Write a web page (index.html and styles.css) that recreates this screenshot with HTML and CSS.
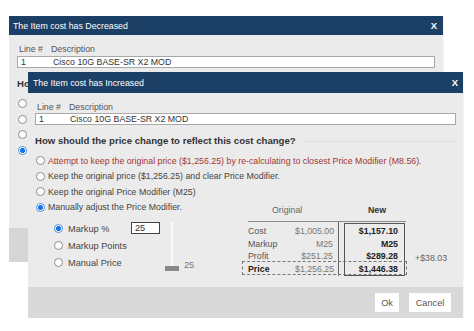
FILE: index.html
```html
<!DOCTYPE html>
<html lang="en">
  <head>
    <meta charset="UTF-8" />
    <title>Cost change</title>
    <link rel="stylesheet" href="styles.css">
  </head>
  <body>
    <div class="dialog dialog-back">
      <div class="dialog-title">
        <span>The Item cost has Decreased</span>
        <span class="close">X</span>
      </div>
      <div class="dialog-body">
        <div class="line-labels"><span class="col-line">Line #</span><span>Description</span></div>
        <div class="line-field"><span class="col-line">1</span><span>Cisco 10G BASE-SR X2 MOD</span></div>
        <div class="question">How</div>
        <div class="options">
          <div class="option"><span class="radio"></span></div>
          <div class="option"><span class="radio"></span></div>
          <div class="option"><span class="radio"></span></div>
          <div class="option"><span class="radio on"></span></div>
        </div>
      </div>
      <div class="dialog-footer"></div>
    </div>

    <div class="dialog dialog-front">
      <div class="dialog-title">
        <span>The Item cost has Increased</span>
        <span class="close">X</span>
      </div>
      <div class="dialog-body">
        <div class="line-labels"><span class="col-line">Line #</span><span>Description</span></div>
        <div class="line-field"><span class="col-line">1</span><span>Cisco 10G BASE-SR X2 MOD</span></div>
        <div class="question">How should the price change to reflect this cost change?</div>
        <div class="options">
          <div class="option warn"><span class="radio"></span>Attempt to keep the original price ($1,256.25) by re-calculating to closest Price Modifier (M8.56).</div>
          <div class="option"><span class="radio"></span>Keep the original price ($1,256.25) and clear Price Modifier.</div>
          <div class="adjust">
            <div class="adjust-left">
              <div class="option"><span class="radio"></span>Keep the original Price Modifier (M25)</div>
              <div class="option"><span class="radio on"></span>Manually adjust the Price Modifier.</div>
              <div class="manual">
                <div class="sub-options">
                  <div class="sub-option"><span class="radio on"></span>Markup %</div>
                  <div class="sub-option"><span class="radio"></span>Markup Points</div>
                  <div class="sub-option"><span class="radio"></span>Manual Price</div>
                </div>
                <div class="markup-box">25</div>
                <div class="slider">
                  <div class="slider-track"></div>
                  <div class="slider-thumb"></div>
                </div>
                <div class="slider-value">25</div>
              </div>
            </div>

            <div class="calc">
              <div class="calc-head">
                <span class="head-orig">Original</span>
                <span class="head-new">New</span>
              </div>
              <div class="calc-body">
                <div class="calc-labels">
                  <div>Cost</div>
                  <div>Markup</div>
                  <div>Profit</div>
                  <div class="strong">Price</div>
                </div>
                <div class="calc-orig">
                  <div>$1,005.00</div>
                  <div>M25</div>
                  <div>$251.25</div>
                  <div>$1,256.25</div>
                </div>
                <div class="calc-new">
                  <div>$1,157.10</div>
                  <div>M25</div>
                  <div>$289.28</div>
                  <div>$1,446.38</div>
                </div>
                <div class="calc-diff">+$38.03</div>
              </div>
              <div class="price-mark"></div>
            </div>
          </div>
        </div>
      </div>
      <div class="dialog-footer">
        <button class="btn btn-ok">Ok</button>
        <button class="btn btn-cancel">Cancel</button>
      </div>
    </div>
  </body>
</html>
```

FILE: styles.css
```css
body {
  margin: 0;
  background: #fff;
  font-family: "Liberation Sans", Arial, sans-serif;
  font-size: 8.8px;
  color: #444;
}

.dialog {
  position: absolute;
  display: flex;
  flex-direction: column;
  background: #ebebeb;
  box-shadow: 1px 0 0 #f6f6f6;
}

.dialog-back {
  left: 9px;
  top: 16px;
  width: 434px;
  height: 246px;
}

.dialog-front {
  left: 28px;
  top: 72px;
  width: 435px;
  height: 246px;
}

.dialog-title {
  display: flex;
  justify-content: space-between;
  align-items: center;
  background: #1c3f66;
  color: #fff;
  padding: 0 6px 0 4px;
  height: 19px;
}

.dialog-front .dialog-title {
  height: 21px;
  padding: 0 5px 0 5px;
}

.close {
  font-size: 9.5px;
  font-weight: bold;
}

.dialog-body {
  padding: 8px 8px 0 8px;
  height: 193px;
  box-sizing: border-box;
}

.dialog-front .dialog-body {
  padding: 8px 7px 0 7px;
  height: 194px;
}

.line-labels {
  display: flex;
  line-height: 12px;
  padding-left: 2px;
  color: #555;
}

.col-line {
  width: 32px;
}

.line-field {
  display: flex;
  height: 12px;
  line-height: 10px;
  box-sizing: border-box;
  margin-top: 1px;
  padding-left: 3px;
  border: 1px solid #a9a9a9;
  background: #fff;
  color: #333;
}

.dialog-front .line-field {
  margin-top: 0;
}

.dialog-front .line-field .col-line {
  width: 31px;
}

.question {
  display: flex;
  align-items: center;
  margin-top: 10px;
  line-height: 12px;
  font-size: 9.6px;
  font-weight: bold;
  color: #333;
  white-space: nowrap;
  overflow: hidden;
}

.question::after {
  content: "";
  flex: 1;
  margin-left: 6px;
  border-top: 1px solid #dedede;
}

.dialog-back .question {
  width: 11px;
}

.options {
  margin-top: 6px;
}

.option {
  display: flex;
  align-items: center;
  height: 15.5px;
  padding-left: 1px;
  white-space: nowrap;
}

.option.warn {
  color: #a3362f;
}

.radio {
  width: 9px;
  height: 9px;
  box-sizing: border-box;
  border: 1px solid #8d8d8d;
  border-radius: 50%;
  background: #fff;
  margin-right: 3px;
  flex: none;
}

.radio.on {
  border-color: #4a8fe0;
  background: radial-gradient(circle, #1a73e8 0 2.2px, #fff 2.8px);
}

.adjust {
  display: flex;
}

.adjust-left {
  width: 207px;
  flex: none;
}

.manual {
  display: flex;
  margin-top: 5px;
  padding-left: 19px;
}

.sub-options {
  width: 77px;
}

.sub-option {
  display: flex;
  align-items: center;
  height: 17px;
  font-size: 9.2px;
  white-space: nowrap;
}

.sub-option .radio {
  margin-right: 5px;
}

.markup-box {
  width: 29px;
  height: 12px;
  box-sizing: border-box;
  margin-top: 1.5px;
  padding-left: 3px;
  line-height: 10px;
  border: 1px solid #444;
  background: #fff;
  color: #333;
  font-size: 9.2px;
}

.slider {
  display: flex;
  flex-direction: column;
  align-items: center;
  width: 14px;
  margin: 1.5px 0 0 5px;
}

.slider-track {
  width: 2px;
  height: 44px;
  background: #fafafa;
}

.slider-thumb {
  width: 14px;
  height: 5px;
  background: #888;
}

.slider-value {
  align-self: flex-end;
  margin: 0 0 0 5px;
  line-height: 12px;
  color: #777;
  font-size: 9.2px;
}

.calc {
  position: relative;
  margin-top: 20px;
}

.calc-head {
  display: flex;
  width: 158px;
  margin-left: 6px;
  height: 17px;
  line-height: 12px;
  border-bottom: 1px solid #8a8a8a;
  color: #666;
}

.head-orig {
  margin-left: 24px;
  width: 96px;
}

.head-new {
  font-weight: bold;
  color: #333;
}

.calc-body {
  display: flex;
  margin-left: 5px;
  line-height: 12.5px;
}

.calc-labels {
  width: 47px;
  padding: 3px 0 0 1px;
  color: #555;
}

.strong {
  font-weight: bold;
  color: #222;
}

.calc-orig {
  width: 38px;
  padding: 3px 5px 1px 0;
  text-align: right;
  border-right: 1px solid #666;
  color: #777;
}

.calc-new {
  width: 53px;
  margin: 1px 0 0 5px;
  padding: 1px 6px 0 0;
  text-align: right;
  font-weight: bold;
  color: #222;
  border: 1px solid #555;
}

.calc-diff {
  padding: 30px 0 0 10px;
  color: #666;
}

.price-mark {
  position: absolute;
  left: 0;
  top: 57px;
  width: 165px;
  height: 14px;
  box-sizing: border-box;
  border: 1px dashed #777;
}

.dialog-footer {
  flex: 1;
  background: #d6d6d6;
}

.dialog-front .dialog-footer {
  display: flex;
  justify-content: flex-end;
  align-items: center;
  gap: 10px;
  padding-right: 12px;
  background: #d9d9d9;
}

.btn {
  height: 19px;
  padding: 0;
  border: none;
  background: #fff;
  color: #555;
  font-family: inherit;
  font-size: 9.2px;
}

.btn-ok {
  width: 24px;
}

.btn-cancel {
  width: 42px;
}
```
